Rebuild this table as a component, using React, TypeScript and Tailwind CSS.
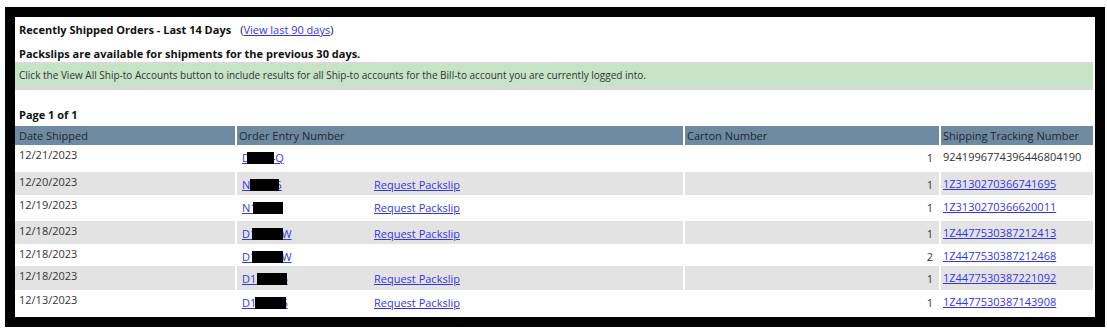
import React from 'react';

type Row = {
  date: string;
  order: string;
  box: string;
  packslip: boolean;
  carton: string;
  tracking: string;
  linked: boolean;
  h: string;
  gray: boolean;
};

const ROWS: Row[] = [
  { date: '12/21/2023', order: 'D1234Q', box: 'left-[5px] w-[27px]', packslip: false, carton: '1', tracking: '9241996774396446804190', linked: false, h: 'h-[27px]', gray: false },
  { date: '12/20/2023', order: 'N12345', box: 'left-[8px] w-[29px]', packslip: true, carton: '1', tracking: '1Z3130270366741695', linked: true, h: 'h-[23px]', gray: true },
  { date: '12/19/2023', order: 'N12345', box: 'left-[11px] w-[30px]', packslip: true, carton: '1', tracking: '1Z3130270366620011', linked: true, h: 'h-[26px]', gray: false },
  { date: '12/18/2023', order: 'D12345W', box: 'left-[10px] w-[31px]', packslip: true, carton: '1', tracking: '1Z4477530387212413', linked: true, h: 'h-[23px]', gray: true },
  { date: '12/18/2023', order: 'D12345W', box: 'left-[10px] w-[31px]', packslip: false, carton: '2', tracking: '1Z4477530387212468', linked: true, h: 'h-[22px]', gray: false },
  { date: '12/18/2023', order: 'D123456', box: 'left-[15px] w-[30px]', packslip: true, carton: '1', tracking: '1Z4477530387221092', linked: true, h: 'h-[24px]', gray: true },
  { date: '12/13/2023', order: 'D123456', box: 'left-[13px] w-[31px]', packslip: true, carton: '1', tracking: '1Z4477530387143908', linked: true, h: 'h-[27px]', gray: false },
];

const link = 'text-[#3535e8] underline';

export default function App() {
  return (
    <div className="bg-white w-[1107px] h-[330px] pt-[7px] pl-[5px] font-['Open_Sans',sans-serif] text-[11px] leading-[15px] text-[#333]">
      <div className="w-[1100px] h-[320px] border-[10px] border-black bg-white flex flex-col pr-[2px]">
        {/* heading */}
        <div className="h-[24px] flex items-center pl-[4px] text-[11px] text-[#111]">
          <span className="font-bold">Recently Shipped Orders - Last 14 Days</span>
          <span className="ml-[9px]">(<a className={link}>View last 90 days</a>)</span>
        </div>
        <div className="h-[21px] flex items-end pb-[1px] pl-[4px] text-[11px] font-bold text-[#111]">
          Packslips are available for shipments for the previous 30 days.
        </div>
        <div className="border-t-2 border-b-[3px] border-[#d9d9d9]">
          <div className="h-[23px] bg-[#c6e3c6] flex items-center pl-[4px] text-[10px] text-[#333]">
            Click the View All Ship-to Accounts button to include results for all Ship-to accounts for the Bill-to account you are currently logged into.
          </div>
        </div>
        <div className="h-[36px] flex items-end pb-[4px] pl-[4px] text-[11px] font-bold text-[#111]">Page 1 of 1</div>

        {/* table */}
        <div className="grid grid-cols-[220px_446px_254px_1fr] gap-x-[2px]">
          {['Date Shipped', 'Order Entry Number', 'Carton Number', 'Shipping Tracking Number'].map((t, i) => (
            <div key={t} className={`h-[19px] bg-[#6e8aa0] flex items-center text-[#1c2732] ${i === 0 ? 'pl-[4px]' : 'pl-[2px]'}`}>{t}</div>
          ))}
          {ROWS.map((r, i) => {
            const bg = r.gray ? 'bg-[#e3e3e3]' : 'bg-white';
            return (
              <React.Fragment key={i}>
                <div className={`${r.h} ${bg} pl-[4px] pt-[2px]`}>{r.date}</div>
                <div className={`${r.h} ${bg} pl-[5px] pt-[5px] flex`}>
                  <div className="w-[132px]">
                    <a className={`${link} relative`}>
                      {r.order}
                      <span className={`absolute top-[2px] h-[12px] bg-black ${r.box}`} />
                    </a>
                  </div>
                  {r.packslip && <a className={link}>Request Packslip</a>}
                </div>
                <div className={`${r.h} ${bg} pr-[6px] pt-[5px] text-right`}>{r.carton}</div>
                <div className={`${r.h} ${bg} pl-[2px] pt-[4px]`}>
                  {r.linked ? <a className={link}>{r.tracking}</a> : r.tracking}
                </div>
              </React.Fragment>
            );
          })}
        </div>
      </div>
    </div>
  );
}
